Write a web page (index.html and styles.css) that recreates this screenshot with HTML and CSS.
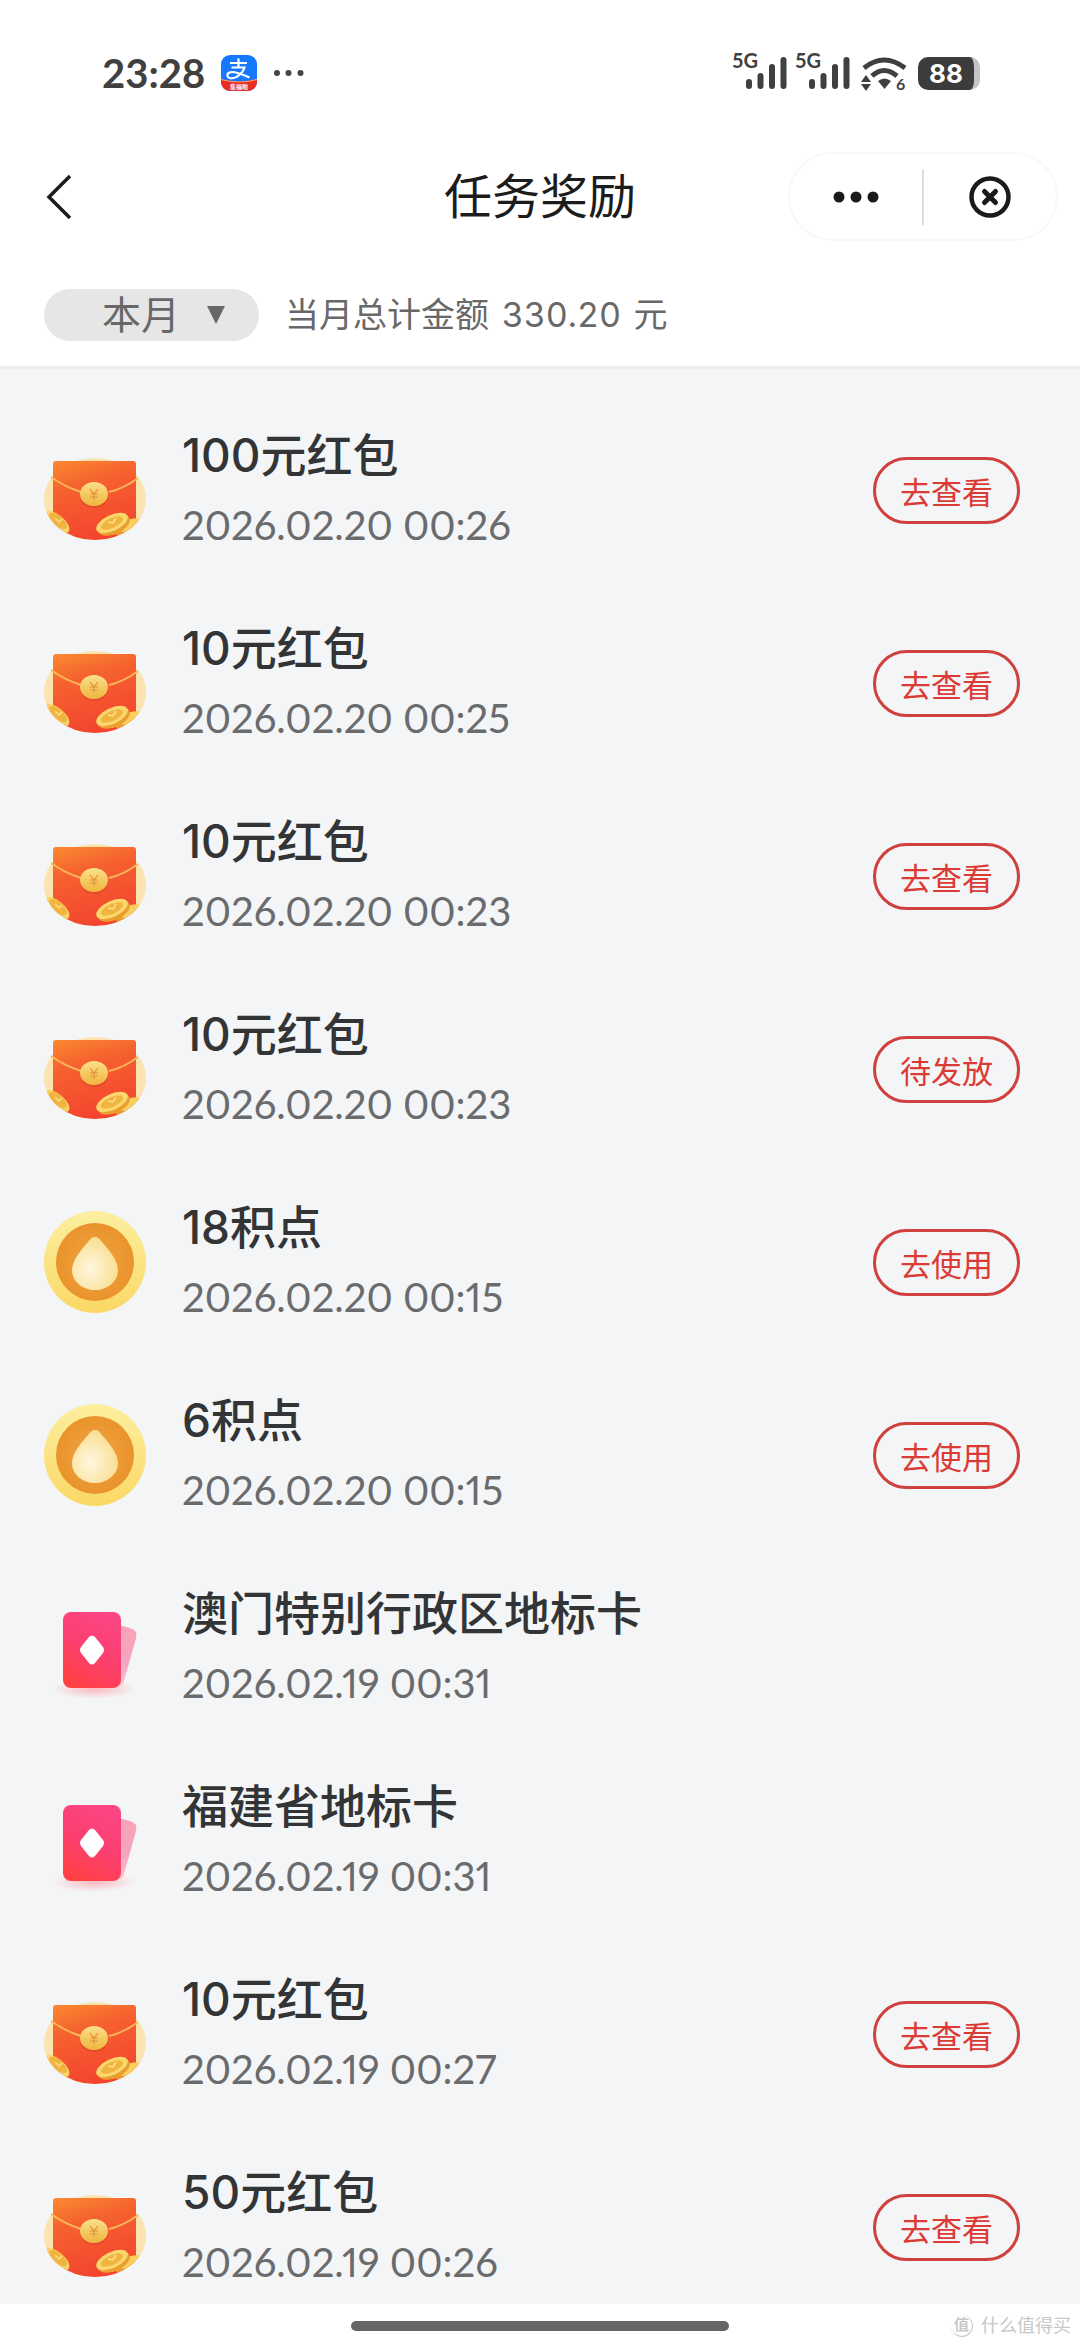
FILE: index.html
```html
<!DOCTYPE html>
<html lang="zh-CN">
<head>
<meta charset="utf-8">
<meta name="viewport" content="width=device-width, initial-scale=1">
<title>任务奖励</title>
<link rel="stylesheet" href="styles.css">
</head>
<body>
<svg class="defs" width="0" height="0" aria-hidden="true">
  <defs>
    <linearGradient id="env" x1="0" y1="0" x2="0.3" y2="1">
      <stop offset="0" stop-color="#fb8a30"/><stop offset="0.35" stop-color="#f5622f"/><stop offset="1" stop-color="#f4442f"/>
    </linearGradient>
    <linearGradient id="gold" x1="0" y1="0" x2="0" y2="1">
      <stop offset="0" stop-color="#fbe08a"/><stop offset="1" stop-color="#f0b53e"/>
    </linearGradient>
    <linearGradient id="ring" x1="0" y1="0" x2="0" y2="1">
      <stop offset="0" stop-color="#fcef9f"/><stop offset="1" stop-color="#fbd866"/>
    </linearGradient>
    <radialGradient id="disc">
      <stop offset="0" stop-color="#f2a544"/><stop offset="1" stop-color="#e9932c"/>
    </radialGradient>
    <radialGradient id="drop" cx="0.4" cy="0.6" r="0.65">
      <stop offset="0" stop-color="#fff7e0"/><stop offset="1" stop-color="#f9dd8c"/>
    </radialGradient>
    <linearGradient id="card" x1="0.7" y1="0" x2="0.3" y2="1">
      <stop offset="0" stop-color="#fb4585"/><stop offset="0.5" stop-color="#fb3f70"/><stop offset="1" stop-color="#ff4144"/>
    </linearGradient>
    <linearGradient id="cardback" x1="0" y1="0" x2="0" y2="1">
      <stop offset="0" stop-color="#f9a3b5"/><stop offset="0.6" stop-color="#f5a3c2"/><stop offset="1" stop-color="#fbc4cb"/>
    </linearGradient>
    <radialGradient id="glow">
      <stop offset="0" stop-color="#ff8f98" stop-opacity="0.6"/><stop offset="1" stop-color="#ff8f98" stop-opacity="0"/>
    </radialGradient>
    <clipPath id="bowl"><path d="M0 0h102v60a51 41 0 0 1-102 0z"/></clipPath>
  </defs>
  <symbol id="packet" viewBox="0 0 102 102">
    <ellipse cx="51" cy="60" rx="51" ry="41" fill="#fde3b0"/>
    <g clip-path="url(#bowl)">
      <path d="M9 25a3 3 0 0 1 3-3h77a3 3 0 0 1 3 3v80H9z" fill="url(#env)"/>
      <path d="M7 38q14 10 30 15M65 53q16-4 29-14" fill="none" stroke="#fbb65a" stroke-width="2"/>
      <ellipse cx="50" cy="58" rx="14" ry="11" fill="#d8402a" opacity="0.5"/>
      <ellipse cx="50" cy="55" rx="14" ry="12" fill="url(#gold)"/>
      <path d="M46 50l4 5 4-5M46 55h8M46 58h8M50 55v6" fill="none" stroke="#e2913a" stroke-width="1.2"/>
      <ellipse cx="12" cy="85" rx="15" ry="8" transform="rotate(40 12 85)" fill="#e99e2f"/>
      <ellipse cx="13" cy="83" rx="15" ry="7" transform="rotate(40 13 83)" fill="#f9d366"/>
      <ellipse cx="14" cy="82" rx="11" ry="5" transform="rotate(40 14 82)" fill="#f0b440"/>
      <path d="M11 79l4 4 3-3" fill="none" stroke="#fbe08a" stroke-width="1.5"/>
      <ellipse cx="85" cy="89" rx="15" ry="8" transform="rotate(-15 85 89)" fill="#e99e2f"/>
      <ellipse cx="87" cy="86" rx="14" ry="6" transform="rotate(-15 87 86)" fill="#f9cf5e"/>
      <ellipse cx="70" cy="86" rx="17" ry="9" transform="rotate(-25 70 86)" fill="#e99e2f"/>
      <ellipse cx="68" cy="84" rx="17" ry="8" transform="rotate(-25 68 84)" fill="#fbd86c"/>
      <ellipse cx="68" cy="84" rx="12" ry="5" transform="rotate(-25 68 84)" fill="#f1b440"/>
      <path d="M64 83l5 1 3-5" fill="none" stroke="#fbe08a" stroke-width="1.5"/>
    </g>
  </symbol>
  <symbol id="point" viewBox="0 0 102 102">
    <circle cx="51" cy="51" r="51" fill="url(#ring)"/>
    <circle cx="51" cy="51" r="39" fill="url(#disc)"/>
    <path d="M51 26C54 26 56 28 58 31C64 38 74 49 74 59C74 71 63 79 51 79S28 71 28 59C28 49 38 38 44 31C46 28 48 26 51 26z" fill="url(#drop)"/>
  </symbol>
  <symbol id="place" viewBox="0 0 102 102">
    <ellipse cx="50" cy="92" rx="42" ry="10" fill="url(#glow)"/>
    <path d="M70 27l16 4q8 2 6 10L80 84q-1 5-6 5h-4z" fill="url(#cardback)"/>
    <rect x="19" y="15" width="58" height="76" rx="8" fill="url(#card)"/>
    <path d="M45 40q3-3 6 0l8 10q2 3 0 6l-8 10q-3 3-6 0l-8-10q-2-3 0-6z" fill="#fff"/>
  </symbol>
</svg>

<div class="status">
  <span class="clock">23:28</span>
  <svg class="app" viewBox="0 0 36 36" role="img" aria-label="支付宝">
    <rect width="36" height="36" rx="9" fill="#1677ff"/>
    <path d="M0 24q18 5 36 0v3a9 9 0 0 1-9 9H9a9 9 0 0 1-9-9z" fill="#ea2d22"/>
    <path d="M0 24.500q18 5 36 0" fill="none" stroke="#ffa467" stroke-width="1"/>
    <path d="M9 8h17M17.500 3.500v8.500M10.500 12.500h13q-2 6-8 9.500-8 3-9-1t6-4q6 1 16 5.500" fill="none" stroke="#fff" stroke-width="2.200"/>
    <text x="18" y="34" class="app-tag">集福啦</text>
  </svg>
  <svg class="more" viewBox="0 0 30 6" aria-hidden="true"><g fill="#444"><circle cx="3" cy="3" r="3"/><circle cx="14.500" cy="3" r="3"/><circle cx="26.500" cy="3" r="3"/></g></svg>
  <span class="system">
    <svg class="signal" viewBox="0 0 56 40" role="img" aria-label="5G">
      <text x="0" y="15" class="net">5G</text>
      <path d="M17 29v4M28.500 23v10M40 14v19M51.500 7v26" stroke="#404040" stroke-width="6" stroke-linecap="round"/>
    </svg>
    <svg class="signal" viewBox="0 0 56 40" role="img" aria-label="5G">
      <text x="0" y="15" class="net">5G</text>
      <path d="M17 29v4M28.500 23v10M40 14v19M51.500 7v26" stroke="#404040" stroke-width="6" stroke-linecap="round"/>
    </svg>
    <svg class="wifi" viewBox="0 0 46 40" role="img" aria-label="Wi-Fi 6">
      <path d="M3 15q20-16 41 0" fill="none" stroke="#404040" stroke-width="5"/>
      <path d="M11 23q12-11 25 0" fill="none" stroke="#404040" stroke-width="5"/>
      <path d="M17 28q6.500-5 13 0l-6.500 8z" fill="#404040"/>
      <path d="M0 29l5-7 5 7zM0 31h10l-5 7z" fill="#404040"/>
      <text x="35" y="37" class="net-small">6</text>
    </svg>
    <span class="battery">88</span>
  </span>
</div>

<header class="nav">
  <button class="back" aria-label="返回"><svg viewBox="0 0 26 46"><path d="M24 2L3 23l21 21" fill="none" stroke="#1c1c1c" stroke-width="3.500"/></svg></button>
  <h1>任务奖励</h1>
  <div class="capsule">
    <button aria-label="更多"><svg class="dots" viewBox="0 0 46 12"><g fill="#1a1a1a"><circle cx="6" cy="6" r="5.500"/><circle cx="23" cy="6" r="5.500"/><circle cx="40" cy="6" r="5.500"/></g></svg></button>
    <button aria-label="关闭"><svg class="close" viewBox="0 0 42 42"><circle cx="21" cy="21" r="18.500" fill="none" stroke="#1a1a1a" stroke-width="4.500"/><path d="M15.500 15.500l11 11M26.500 15.500l-11 11" stroke="#1a1a1a" stroke-width="5" stroke-linecap="round"/></svg></button>
  </div>
</header>

<div class="filter">
  <label class="period">
    <select aria-label="月份"><option>本月</option></select>
    <svg viewBox="0 0 18 18" aria-hidden="true"><path d="M0 0h18L9 18z" fill="#686868"/></svg>
  </label>
  <p class="total">当月总计金额 <span class="amount">330.20</span> 元</p>
</div>

<main>
  <ul class="rewards">
    <li><svg class="icon"><use href="#packet"/></svg><div class="info"><h2>100元红包</h2><time>2026.02.20 00:26</time></div><button class="action">去查看</button></li>
    <li><svg class="icon"><use href="#packet"/></svg><div class="info"><h2>10元红包</h2><time>2026.02.20 00:25</time></div><button class="action">去查看</button></li>
    <li><svg class="icon"><use href="#packet"/></svg><div class="info"><h2>10元红包</h2><time>2026.02.20 00:23</time></div><button class="action">去查看</button></li>
    <li><svg class="icon"><use href="#packet"/></svg><div class="info"><h2>10元红包</h2><time>2026.02.20 00:23</time></div><button class="action">待发放</button></li>
    <li><svg class="icon"><use href="#point"/></svg><div class="info"><h2>18积点</h2><time>2026.02.20 00:15</time></div><button class="action">去使用</button></li>
    <li><svg class="icon"><use href="#point"/></svg><div class="info"><h2>6积点</h2><time>2026.02.20 00:15</time></div><button class="action">去使用</button></li>
    <li><svg class="icon"><use href="#place"/></svg><div class="info"><h2>澳门特别行政区地标卡</h2><time>2026.02.19 00:31</time></div></li>
    <li><svg class="icon"><use href="#place"/></svg><div class="info"><h2>福建省地标卡</h2><time>2026.02.19 00:31</time></div></li>
    <li><svg class="icon"><use href="#packet"/></svg><div class="info"><h2>10元红包</h2><time>2026.02.19 00:27</time></div><button class="action">去查看</button></li>
    <li><svg class="icon"><use href="#packet"/></svg><div class="info"><h2>50元红包</h2><time>2026.02.19 00:26</time></div><button class="action">去查看</button></li>
  </ul>
</main>

<footer class="bottom">
  <span class="home"></span>
  <span class="mark"><span class="mark-logo">值</span>什么值得买</span>
</footer>
</body>
</html>
```
FILE: styles.css
```css
* {
  box-sizing: border-box;
}

body {
  margin: 0;
  min-height: 100vh;
  display: flex;
  flex-direction: column;
  background: #fff;
  font-family: Inter, "Noto Sans CJK SC", sans-serif;
  color: #1c1c1c;
}

h1, h2, p, ul {
  margin: 0;
  padding: 0;
}

button {
  padding: 0;
  border: 0;
  background: none;
  font-family: inherit;
  cursor: pointer;
}

svg {
  display: block;
}

.defs {
  position: absolute;
}

/* Phone status bar */
.status {
  display: flex;
  align-items: center;
  height: 146px;
  padding: 0 100px 0 102px;
}

.clock {
  font: 700 40px/50px Lato, sans-serif;
  color: #404040;
}

.app {
  width: 36px;
  height: 36px;
  margin-left: 16px;
}

.app-tag {
  font: 700 6px "Noto Sans CJK SC", sans-serif;
  fill: #fff;
  text-anchor: middle;
}

.more {
  width: 30px;
  height: 6px;
  margin-left: 17px;
}

.system {
  display: flex;
  align-items: center;
  gap: 7px;
  margin-left: auto;
}

.system svg {
  overflow: visible;
}

.signal {
  width: 56px;
  height: 40px;
}

.net {
  font: 700 20px Lato, sans-serif;
  fill: #404040;
}

.net-small {
  font: 700 16px Lato, sans-serif;
  fill: #404040;
}

.wifi {
  width: 46px;
  height: 40px;
  margin-left: 3px;
}

.battery {
  width: 62px;
  height: 33px;
  margin-left: 4px;
  border-right: 6px solid #c4c4c4;
  border-radius: 10px;
  background: #3c3c3c;
  color: #fff;
  font: 700 26px/33px Inter, sans-serif;
  text-align: center;
}

/* Title bar */
.nav {
  display: grid;
  grid-template-columns: 1fr auto 1fr;
  align-items: center;
  padding: 6px 22px 0;
}

.back {
  justify-self: start;
  padding: 0 24px;
}

.back svg {
  width: 26px;
  height: 46px;
}

h1 {
  font-size: 48px;
  font-weight: 400;
  line-height: 60px;
}

.capsule {
  justify-self: end;
  display: flex;
  align-items: center;
  width: 270px;
  height: 89px;
  border: 2px solid #f8f8f8;
  border-radius: 45px;
}

.capsule button {
  flex: 1;
  display: grid;
  place-items: center;
  height: 56px;
}

.capsule button + button {
  border-left: 2px solid #ddd;
}

.dots {
  width: 46px;
  height: 12px;
}

.close {
  width: 42px;
  height: 42px;
}

/* Month filter */
.filter {
  display: flex;
  align-items: center;
  gap: 26px;
  height: 125px;
  padding: 48px 44px 25px;
}

.period {
  display: flex;
  align-items: center;
  gap: 26px;
  height: 52px;
  padding: 0 34px 0 58px;
  border-radius: 26px;
  background: #e6e6e6;
}

.period select {
  appearance: none;
  padding: 0 0 6px;
  border: 0;
  background: none;
  color: #686868;
  font: 400 39px/52px "Noto Sans CJK SC", sans-serif;
}

.period svg {
  width: 18px;
  height: 18px;
}

.total {
  padding-bottom: 4px;
  color: #686868;
  font: 400 34px/48px "Noto Sans CJK SC", sans-serif;
}

.amount {
  margin: 0 5px;
  font-family: Inter, sans-serif;
  line-height: 1;
  font-variant-numeric: tabular-nums;
}

/* Reward list */
main {
  flex: 1;
  border-top: 3px solid #eee;
  background: #f3f5f7;
}

.rewards {
  display: flex;
  flex-direction: column;
  gap: 73px;
  padding: 61px 60px 17px 44px;
  list-style: none;
}

.rewards li {
  display: flex;
  align-items: center;
}

.icon {
  width: 102px;
  height: 102px;
}

.info {
  flex: 1;
  display: flex;
  flex-direction: column;
  gap: 20px;
  margin-left: 36px;
}

h2 {
  color: #323436;
  font-size: 46px;
  font-weight: 500;
  line-height: 50px;
}

time {
  color: #6a6b6d;
  font: 400 40px/50px Lato, sans-serif;
  font-variant-numeric: proportional-nums;
}

.action {
  width: 147px;
  height: 67px;
  padding-top: 1px;
  border: 3px solid #d0403c;
  border-radius: 34px;
  color: #dc3a35;
  font-size: 31px;
}

/* Gesture area */
.bottom {
  display: grid;
  grid-template-columns: 1fr 378px 1fr;
  align-items: center;
  height: 43px;
  padding: 0 9px;
}

.home {
  grid-column: 2;
  height: 10px;
  border-radius: 5px;
  background: #666;
}

.mark {
  justify-self: end;
  display: flex;
  align-items: center;
  gap: 8px;
  color: #c8c8c8;
  font-size: 18px;
  line-height: 24px;
}

.mark-logo {
  width: 22px;
  height: 22px;
  border-right: 1px solid #c8c8c8;
  border-bottom: 1px solid #c8c8c8;
  border-radius: 50%;
  font-size: 15px;
  font-weight: 700;
  line-height: 20px;
  text-align: center;
}
```
